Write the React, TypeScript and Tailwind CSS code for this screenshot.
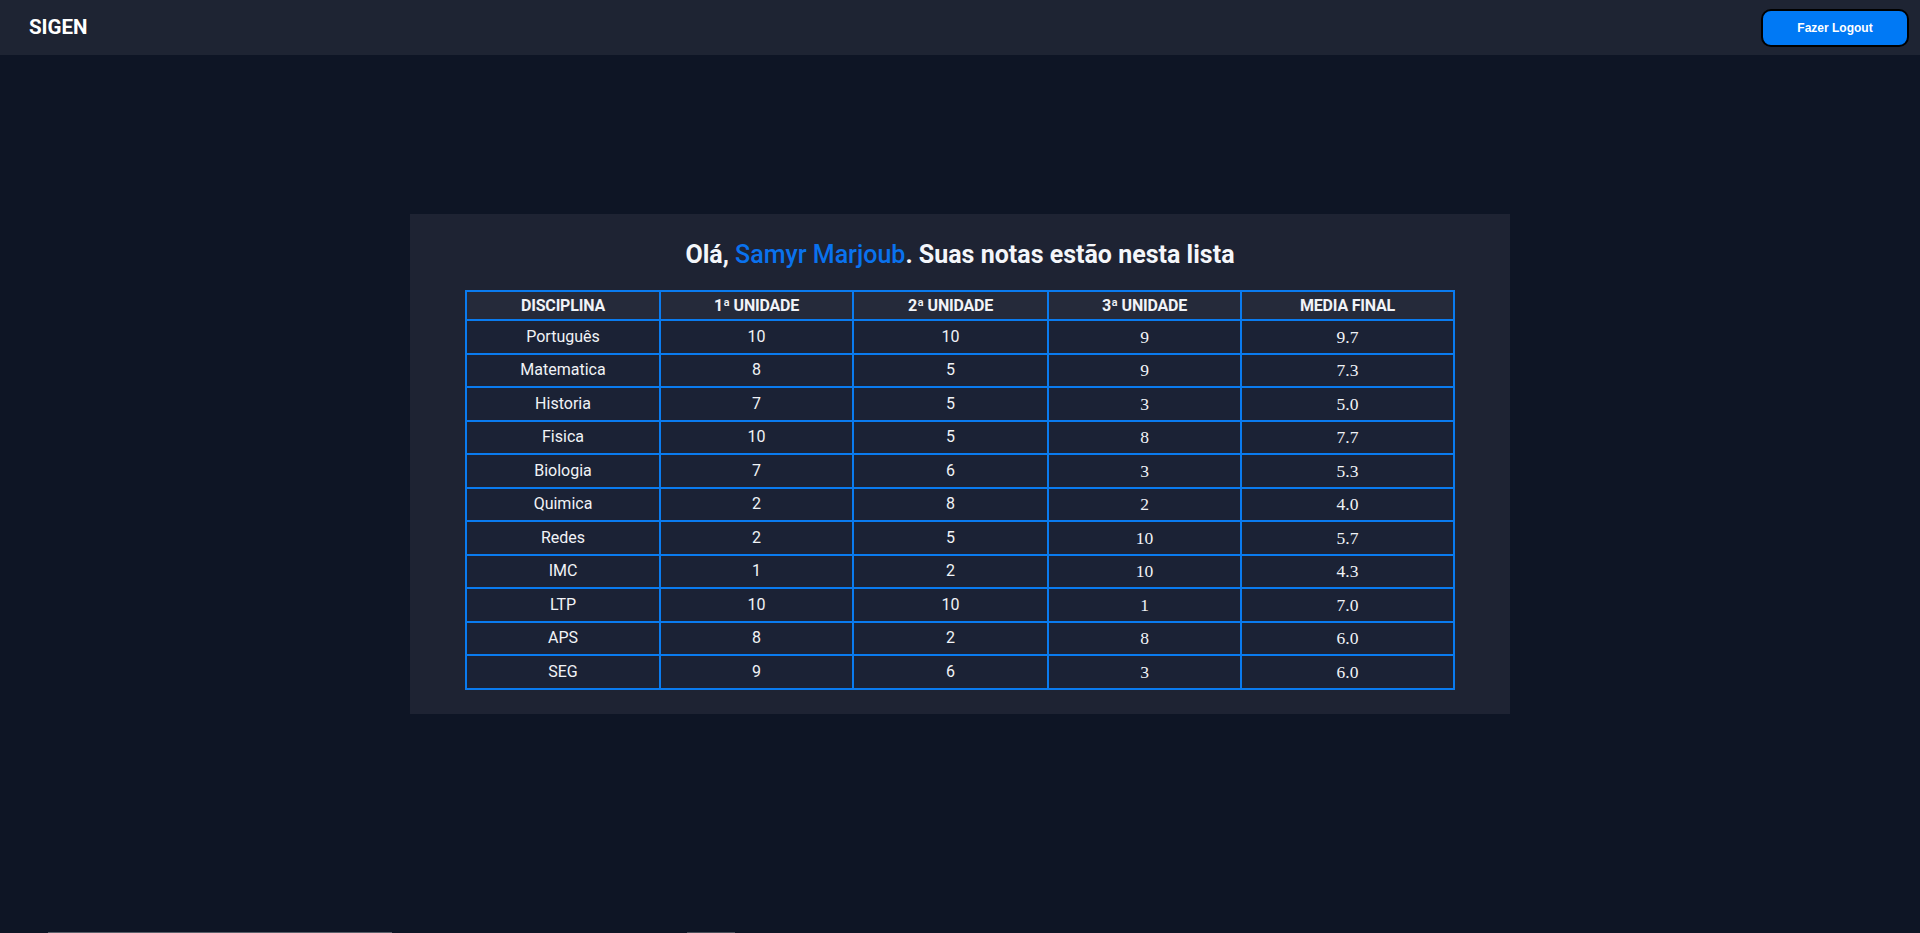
const notas = [
  { disciplina: "Português", u1: 10, u2: 10, u3: 9, media: "9.7" },
  { disciplina: "Matematica", u1: 8, u2: 5, u3: 9, media: "7.3" },
  { disciplina: "Historia", u1: 7, u2: 5, u3: 3, media: "5.0" },
  { disciplina: "Fisica", u1: 10, u2: 5, u3: 8, media: "7.7" },
  { disciplina: "Biologia", u1: 7, u2: 6, u3: 3, media: "5.3" },
  { disciplina: "Quimica", u1: 2, u2: 8, u3: 2, media: "4.0" },
  { disciplina: "Redes", u1: 2, u2: 5, u3: 10, media: "5.7" },
  { disciplina: "IMC", u1: 1, u2: 2, u3: 10, media: "4.3" },
  { disciplina: "LTP", u1: 10, u2: 10, u3: 1, media: "7.0" },
  { disciplina: "APS", u1: 8, u2: 2, u3: 8, media: "6.0" },
  { disciplina: "SEG", u1: 9, u2: 6, u3: 3, media: "6.0" },
];

const th =
  "h-[29px] border-2 border-[#0a7bef] text-center text-[16px] font-bold uppercase text-[#f1f3f7] tracking-[-0.2px]";
const td = "h-[33.5px] border-2 border-[#0a7bef] text-center text-[16px] text-[#f1f3f7]";
const serif = "font-['Liberation_Serif',serif] text-[17.5px]";

export default function App() {
  return (
    <div className="flex h-[933px] flex-col overflow-hidden bg-[#0e1525] font-['Roboto',sans-serif]">
      {/* Top bar */}
      <header className="flex h-[55px] flex-shrink-0 items-center justify-between bg-[#1e2433] pl-[29px] pr-[11px]">
        <span className="text-[20.5px] font-bold text-white">SIGEN</span>
        <button className="h-[38px] w-[148px] rounded-[10px] border-2 border-black bg-[#0079f5] font-['Liberation_Sans',sans-serif] text-[12px] font-bold text-white">
          Fazer Logout
        </button>
      </header>

      {/* Content */}
      <main className="flex flex-1 justify-center pt-[159px]">
        <div className="flex h-[500px] w-[1100px] flex-col items-center bg-[#1e2333] pt-[25px]">
          <h1 className="mb-[19px] text-[25px] font-bold leading-8 text-[#f4f6fa]">
            Olá, <span className="font-medium text-[#0a72ee]">Samyr Marjoub</span>. Suas notas estão nesta lista
          </h1>
          <table className="w-[988px] table-fixed border-collapse border-2 border-[#0a7bef]">
            <colgroup>
              <col className="w-[194px]" />
              <col className="w-[193px]" />
              <col className="w-[195px]" />
              <col className="w-[193px]" />
              <col className="w-[213px]" />
            </colgroup>
            <thead className="bg-[#252a3a]">
              <tr>
                <th className={th}>Disciplina</th>
                <th className={th}>1ª Unidade</th>
                <th className={th}>2ª Unidade</th>
                <th className={th}>3ª Unidade</th>
                <th className={th}>Media Final</th>
              </tr>
            </thead>
            <tbody className="bg-[#1b2235]">
              {notas.map((n) => (
                <tr key={n.disciplina}>
                  <td className={td}>{n.disciplina}</td>
                  <td className={td}>{n.u1}</td>
                  <td className={td}>{n.u2}</td>
                  <td className={`${td} ${serif}`}>{n.u3}</td>
                  <td className={`${td} ${serif}`}>{n.media}</td>
                </tr>
              ))}
            </tbody>
          </table>
        </div>
      </main>

      {/* Edge of content below the fold */}
      <div className="flex h-px flex-shrink-0">
        <div className="ml-[48px] w-[344px] bg-[#5a5f6a]" />
        <div className="ml-[295px] w-[48px] bg-[#4a4f5a]" />
      </div>
    </div>
  );
}
